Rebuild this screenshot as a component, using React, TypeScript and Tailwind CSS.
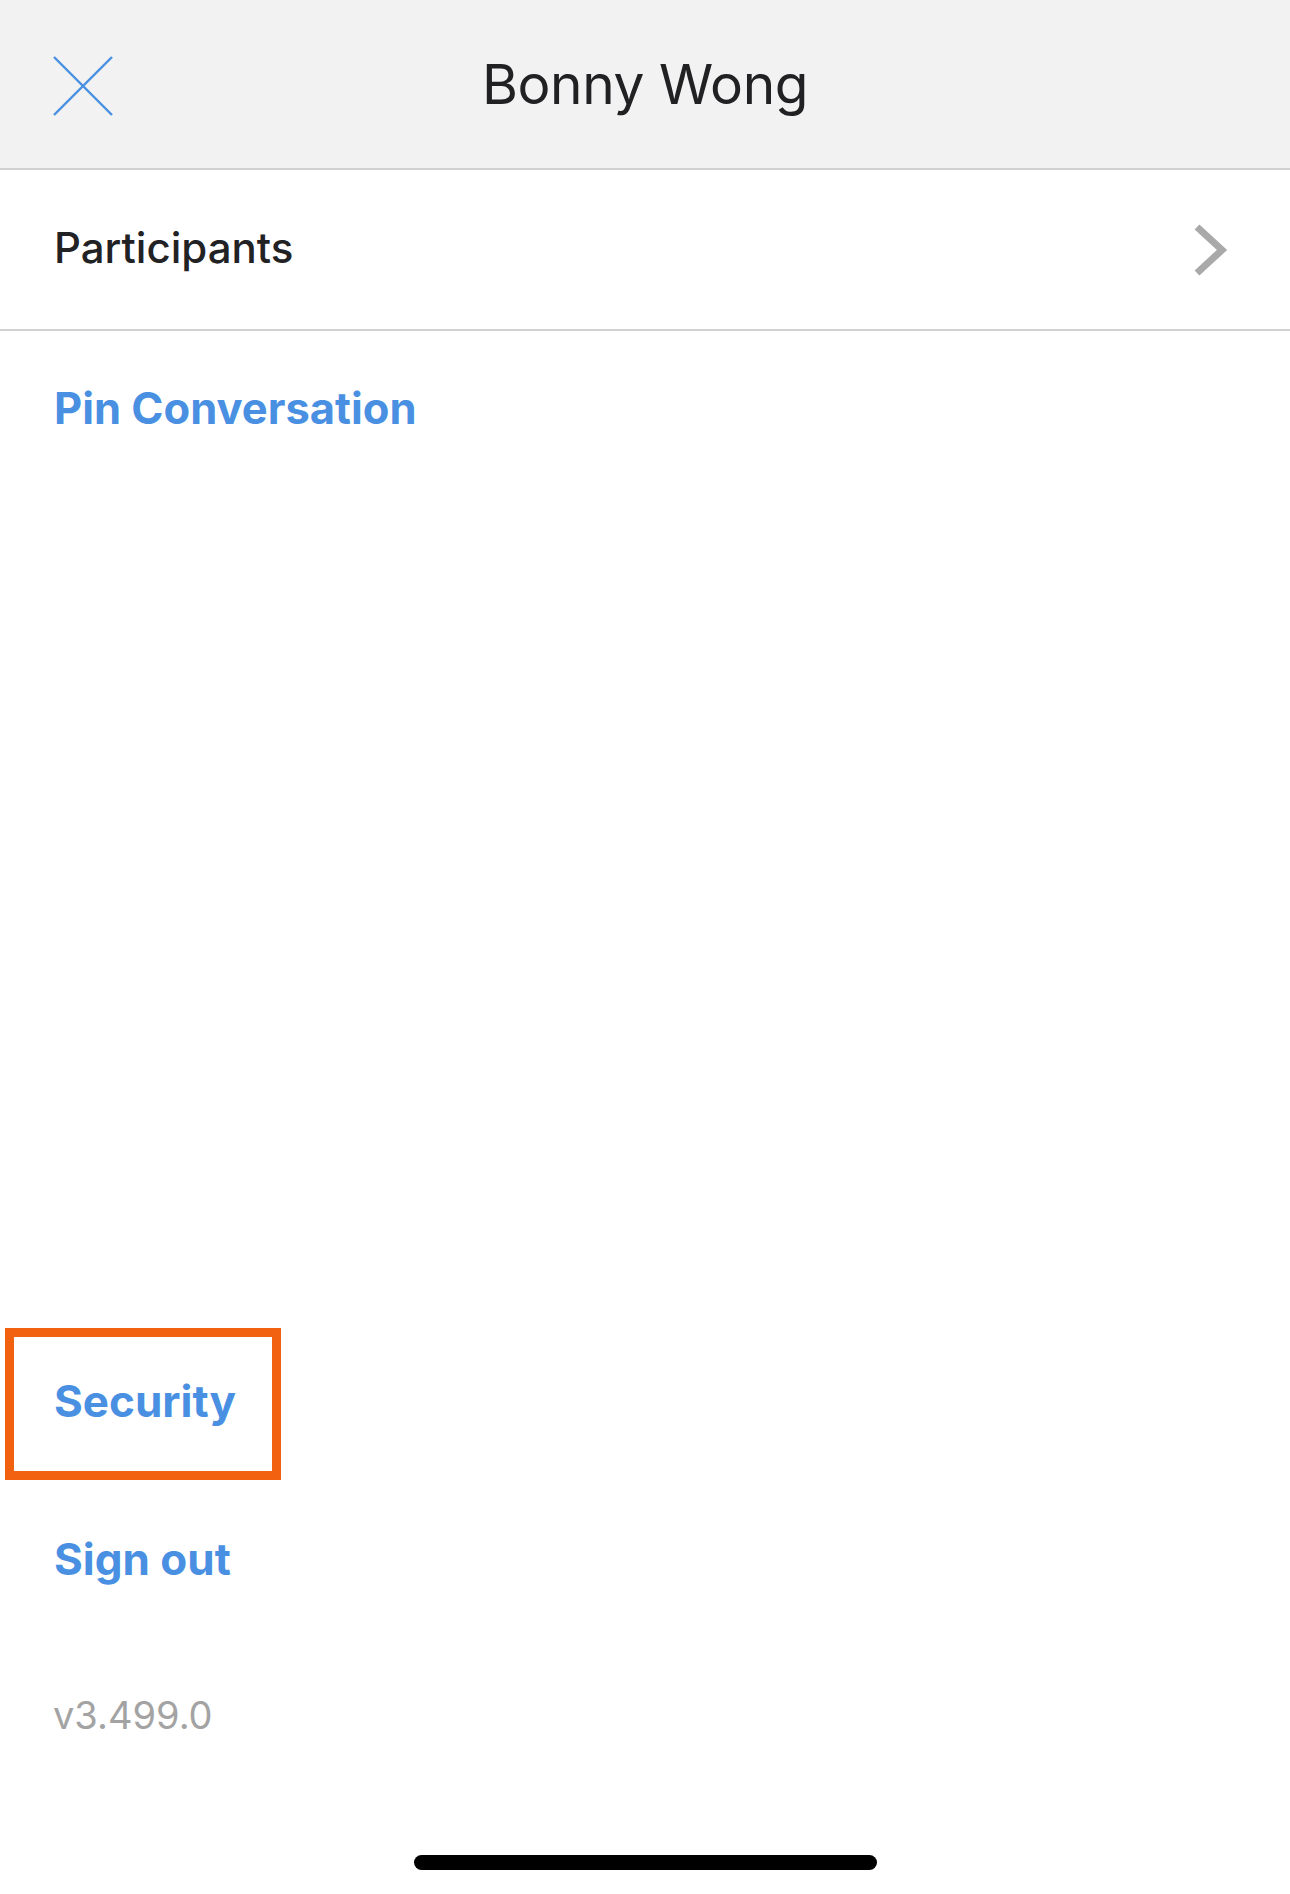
import React from "react";

export default function App() {
  const font = { fontFamily: "Inter, 'Noto Sans', sans-serif" };
  return (
    <div className="w-[1290px] h-[1894px] bg-white flex flex-col overflow-hidden" style={font}>
      {/* Header */}
      <div className="relative h-[170px] bg-[#f2f2f2] border-b-2 border-[#d1d1d1] flex items-center justify-center shrink-0">
        <svg className="absolute left-[53px] top-[56px]" width="60" height="60" viewBox="0 0 60 60">
          <line x1="1" y1="1" x2="59" y2="59" stroke="#4a90e2" strokeWidth="2.4" />
          <line x1="59" y1="1" x2="1" y2="59" stroke="#4a90e2" strokeWidth="2.4" />
        </svg>
        <span className="text-[55px] leading-none text-[#212124] font-normal tracking-[-0.4px]">Bonny Wong</span>
      </div>

      {/* Participants */}
      <div className="h-[161px] border-b-2 border-[#d1d1d1] flex items-center justify-between pl-[54px] pr-[62px] pb-[4px] shrink-0">
        <span className="text-[42px] leading-none text-[#222225] font-medium">Participants</span>
        <svg width="36" height="54" viewBox="0 0 36 54" className="mt-[4px]">
          <polyline points="5,4 30,27 5,50" fill="none" stroke="#a9a9a9" strokeWidth="7" />
        </svg>
      </div>

      {/* Pin Conversation */}
      <div className="h-[155px] flex items-center pl-[54px] shrink-0">
        <span className="text-[43.5px] leading-none text-[#4a90e2] font-bold">Pin Conversation</span>
      </div>

      <div className="flex-1" />

      {/* Security */}
      <div className="relative h-[152px] flex items-center pl-[54px] shrink-0">
        <div className="absolute left-[5px] top-[3px] w-[276px] h-[152px] border-[9px] border-[#f26110]" />
        <span className="text-[44px] leading-none text-[#4a90e2] font-bold">Security</span>
      </div>

      {/* Sign out */}
      <div className="h-[163px] flex items-center pl-[54px] shrink-0">
        <span className="text-[44px] leading-none text-[#4a90e2] font-bold">Sign out</span>
      </div>

      {/* Version */}
      <div className="h-[150px] flex items-center pl-[53px] shrink-0">
        <span className="text-[38px] leading-none text-[#a3a3a3] font-normal">v3.499.0</span>
      </div>

      {/* Home indicator */}
      <div className="h-[104px] flex justify-center pt-[65px] shrink-0">
        <div className="w-[463px] h-[15px] rounded-full bg-black" />
      </div>
    </div>
  );
}
